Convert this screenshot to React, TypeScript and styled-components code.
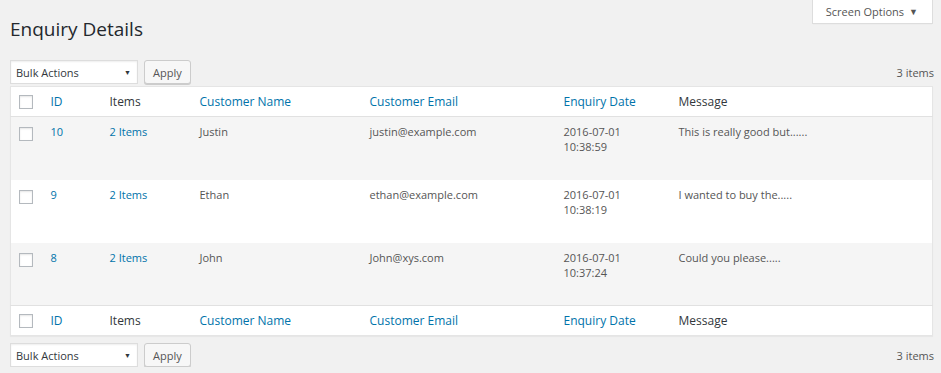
import styled, { createGlobalStyle } from "styled-components";

const GlobalStyle = createGlobalStyle`
  html, body {
    margin: 0;
    padding: 0;
    background: #f1f1f1;
  }
  body {
    font-family: "Open Sans", "Liberation Sans", sans-serif;
    color: #444;
    font-size: 11px;
  }
`;

type Enquiry = {
  id: number;
  items: string;
  name: string;
  email: string;
  date: string;
  time: string;
  message: string;
};

const enquiries: Enquiry[] = [
  { id: 10, items: "2 Items", name: "Justin", email: "justin@example.com", date: "2016-07-01", time: "10:38:59", message: "This is really good but......" },
  { id: 9, items: "2 Items", name: "Ethan", email: "ethan@example.com", date: "2016-07-01", time: "10:38:19", message: "I wanted to buy the....." },
  { id: 8, items: "2 Items", name: "John", email: "John@xys.com", date: "2016-07-01", time: "10:37:24", message: "Could you please....." },
];

const Wrap = styled.div`
  padding: 0 8px 0 10px;
`;

const TopBar = styled.div`
  display: flex;
  justify-content: space-between;
  align-items: flex-start;
  height: 60px;
`;

const Title = styled.h1`
  margin: 0;
  padding-top: 16px;
  font-size: 19px;
  line-height: 26px;
  font-weight: 400;
  color: #23282d;
`;

const ScreenTab = styled.div`
  display: flex;
  align-items: center;
  gap: 5px;
  height: 23px;
  padding: 0 14px 0 13px;
  background: #fff;
  border: 1px solid #ddd;
  border-top: none;
  box-shadow: 0 1px 1px -1px rgba(0, 0, 0, 0.1);
  color: #555;
  font-size: 11px;
`;

const Caret = styled.span`
  font-size: 9px;
  color: #555;
`;

const Toolbar = styled.div<{ $bottom?: boolean }>`
  display: flex;
  align-items: center;
  height: 24px;
  margin: ${({ $bottom }) => ($bottom ? "7px 0 0" : "0 0 2px")};
`;

const SelectBox = styled.div`
  box-sizing: border-box;
  display: flex;
  align-items: center;
  justify-content: space-between;
  width: 128px;
  height: 24px;
  padding: 0 6px 0 5px;
  background: #fff;
  border: 1px solid #ddd;
  box-shadow: inset 0 1px 2px rgba(0, 0, 0, 0.07);
  color: #32373c;
  font-size: 11px;
`;

const SelectArrow = styled.span`
  font-size: 7px;
  color: #32373c;
`;

const ApplyButton = styled.button`
  box-sizing: border-box;
  height: 24px;
  margin-left: 6px;
  padding: 0 8px;
  background: #f7f7f7;
  border: 1px solid #ccc;
  border-radius: 3px;
  box-shadow: 0 1px 0 #ccc;
  color: #555;
  font-family: inherit;
  font-size: 11px;
`;

const Count = styled.span`
  margin-left: auto;
  margin-right: -1px;
  color: #555;
  font-size: 11px;
`;

const Table = styled.table`
  width: 923px;
  table-layout: fixed;
  border-collapse: collapse;
  background: #fff;
  border: 1px solid #e5e5e5;
  box-shadow: 0 1px 1px rgba(0, 0, 0, 0.04);
`;

const HeadCell = styled.th<{ $link?: boolean }>`
  height: 29px;
  padding: 0 10px;
  text-align: left;
  vertical-align: middle;
  font-weight: 400;
  font-size: 12px;
  color: ${({ $link }) => ($link ? "#0073aa" : "#32373c")};
`;

const HeadRow = styled.tr<{ $foot?: boolean }>`
  ${({ $foot }) =>
    $foot ? "border-top: 1px solid #e1e1e1;" : "border-bottom: 1px solid #e1e1e1;"}
`;

const Row = styled.tr<{ $alt: boolean }>`
  height: 63px;
  background: ${({ $alt }) => ($alt ? "#f5f5f5" : "#fff")};
`;

const Cell = styled.td<{ $link?: boolean }>`
  padding: 7px 10px 0;
  vertical-align: top;
  line-height: 15px;
  font-size: 11px;
  color: ${({ $link }) => ($link ? "#0073aa" : "#555")};
`;

const CheckCell = styled.td`
  padding: 0 0 0 8px;
  vertical-align: top;
`;

const CheckHead = styled.th`
  padding: 0 0 0 8px;
  vertical-align: middle;
`;

const Box = styled.span<{ $top?: number }>`
  display: block;
  box-sizing: border-box;
  width: 14px;
  height: 14px;
  margin-top: ${({ $top }) => $top ?? 0}px;
  background: #fff;
  border: 1px solid #b4b9be;
  box-shadow: inset 0 1px 2px rgba(0, 0, 0, 0.1);
`;

function Columns() {
  return (
    <colgroup>
      <col style={{ width: 30 }} />
      <col style={{ width: 59 }} />
      <col style={{ width: 90 }} />
      <col style={{ width: 170 }} />
      <col style={{ width: 194 }} />
      <col style={{ width: 115 }} />
      <col />
    </colgroup>
  );
}

function Header({ foot }: { foot?: boolean }) {
  return (
    <HeadRow $foot={foot}>
      <CheckHead>
        <Box />
      </CheckHead>
      <HeadCell $link>ID</HeadCell>
      <HeadCell>Items</HeadCell>
      <HeadCell $link>Customer Name</HeadCell>
      <HeadCell $link>Customer Email</HeadCell>
      <HeadCell $link>Enquiry Date</HeadCell>
      <HeadCell>Message</HeadCell>
    </HeadRow>
  );
}

function Actions({ bottom }: { bottom?: boolean }) {
  return (
    <Toolbar $bottom={bottom}>
      <SelectBox>
        <span>Bulk Actions</span>
        <SelectArrow>▼</SelectArrow>
      </SelectBox>
      <ApplyButton>Apply</ApplyButton>
      <Count>3 items</Count>
    </Toolbar>
  );
}

export default function App() {
  return (
    <>
      <GlobalStyle />
      <Wrap>
        <TopBar>
          <Title>Enquiry Details</Title>
          <ScreenTab>
            Screen Options <Caret>▼</Caret>
          </ScreenTab>
        </TopBar>
        <Actions />
        <Table>
          <Columns />
          <thead>
            <Header />
          </thead>
          <tbody>
            {enquiries.map((e, i) => (
              <Row key={e.id} $alt={i % 2 === 0}>
                <CheckCell>
                  <Box $top={10} />
                </CheckCell>
                <Cell $link>{e.id}</Cell>
                <Cell $link>{e.items}</Cell>
                <Cell>{e.name}</Cell>
                <Cell>{e.email}</Cell>
                <Cell>
                  {e.date}
                  <br />
                  {e.time}
                </Cell>
                <Cell>{e.message}</Cell>
              </Row>
            ))}
          </tbody>
          <tfoot>
            <Header foot />
          </tfoot>
        </Table>
        <Actions bottom />
      </Wrap>
    </>
  );
}
